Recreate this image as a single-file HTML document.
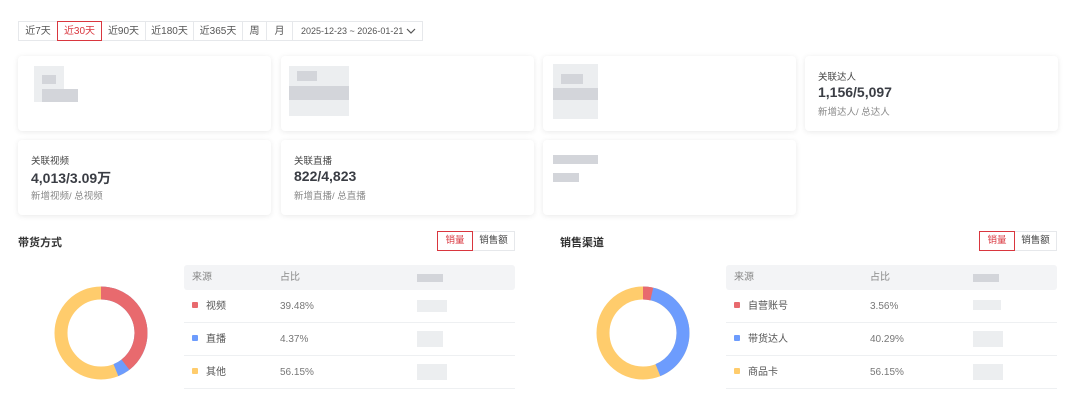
<!DOCTYPE html>
<html><head><meta charset="utf-8"><style>
*{box-sizing:border-box;margin:0;padding:0}
body{width:1080px;height:408px;background:#fff;font-family:"Liberation Sans","Noto Sans CJK SC",sans-serif;color:#333;position:relative;overflow:hidden}
.a{position:absolute}
.tab{position:absolute;top:21px;height:20px;border:1px solid #e6e8eb;font-size:10px;line-height:19px;text-align:center;color:#555}
.card{position:absolute;width:253px;height:75px;background:#fff;border-radius:4px;box-shadow:0 1px 6px rgba(0,0,0,.09)}
.lb{position:absolute;left:13px;top:13px;font-size:9.5px;color:#444}
.val{position:absolute;left:13px;top:28px;font-size:14px;font-weight:bold;color:#3a3d44}
.sub{position:absolute;left:13px;top:48px;font-size:9.5px;color:#888}
.bl{position:absolute;background:#d3d5da}
.bl2{position:absolute;background:#eceef0}
.title{position:absolute;top:234px;font-size:11px;font-weight:bold;color:#333}
.tg{position:absolute;top:231px;height:20px;font-size:9.5px;line-height:18px;text-align:center}
.th{position:absolute;height:25px;background:#f3f4f6;border-radius:3px;font-size:10px;line-height:25px;color:#888}
.row{position:absolute;height:33px;border-bottom:1px solid #eef0f2;font-size:10px;line-height:33px;color:#555}
.pc{color:#777}
.dot{display:inline-block;width:6px;height:6px;border-radius:1px;margin:0 8px 1px 8px}
</style></head><body>
<div class="tab" style="left:18px;width:40px">近7天</div>
<div class="tab" style="left:57px;width:45px;border-color:#d9363e;color:#d9363e;z-index:2">近30天</div>
<div class="tab" style="left:101px;width:45px">近90天</div>
<div class="tab" style="left:145px;width:49px">近180天</div>
<div class="tab" style="left:193px;width:50px">近365天</div>
<div class="tab" style="left:242px;width:25px">周</div>
<div class="tab" style="left:266px;width:27px">月</div>
<div class="tab" style="left:292px;width:131px;text-align:left;padding-left:8px;font-size:9px">2025-12-23 ~ 2026-01-21 <svg class="a" style="left:113px;top:6px" width="10" height="6" viewBox="0 0 10 6"><path d="M1 1l4 4 4-4" stroke="#555" fill="none" stroke-width="1.2"/></svg></div>

<div class="card" style="left:18px;top:56px"><div class="bl2" style="left:16px;top:10px;width:30px;height:36px"></div><div class="bl" style="left:24px;top:19px;width:14px;height:9px"></div><div class="bl" style="left:24px;top:33px;width:36px;height:13px"></div></div>
<div class="card" style="left:281px;top:56px"><div class="bl2" style="left:8px;top:10px;width:60px;height:50px"></div><div class="bl" style="left:16px;top:15px;width:20px;height:10px"></div><div class="bl" style="left:8px;top:30px;width:60px;height:14px"></div></div>
<div class="card" style="left:543px;top:56px"><div class="bl2" style="left:10px;top:8px;width:45px;height:55px"></div><div class="bl" style="left:18px;top:18px;width:22px;height:10px"></div><div class="bl" style="left:10px;top:32px;width:45px;height:12px"></div></div>
<div class="card" style="left:805px;top:56px"><div class="lb">关联达人</div><div class="val">1,156/5,097</div><div class="sub">新增达人/ 总达人</div></div>
<div class="card" style="left:18px;top:140px"><div class="lb">关联视频</div><div class="val">4,013/3.09万</div><div class="sub">新增视频/ 总视频</div></div>
<div class="card" style="left:281px;top:140px"><div class="lb">关联直播</div><div class="val">822/4,823</div><div class="sub">新增直播/ 总直播</div></div>
<div class="card" style="left:543px;top:140px"><div class="bl" style="left:10px;top:15px;width:45px;height:9px"></div><div class="bl" style="left:10px;top:33px;width:26px;height:9px"></div></div>

<div class="title" style="left:18px">带货方式</div>
<div class="tg" style="left:437px;width:36px;border:1px solid #d9363e;color:#d9363e;z-index:2">销量</div>
<div class="tg" style="left:472px;width:43px;border:1px solid #e6e8eb;color:#444">销售额</div>
<svg class="a" style="left:54px;top:286px" width="94" height="94" viewBox="0 0 94 94"><g transform="rotate(-90 47 47)" fill="none" stroke-width="13">
<circle cx="47" cy="47" r="40" stroke="#ffcc6c"/>
<circle cx="47" cy="47" r="40" stroke="#6d9cfd" stroke-dasharray="110.2 251.3"/>
<circle cx="47" cy="47" r="40" stroke="#e86a6e" stroke-dasharray="99.2 251.3"/></g></svg>
<div class="th" style="left:184px;top:265px;width:331px"><span style="position:absolute;left:8px">来源</span><span style="position:absolute;left:96px">占比</span><div class="bl" style="left:233px;top:9px;width:26px;height:8px"></div></div>
<div class="row" style="left:184px;top:290px;width:331px"><span class="dot" style="background:#e86a6e"></span>视频<span class="a pc" style="left:96px">39.48%</span><div class="bl2" style="left:233px;top:10px;width:30px;height:12px"></div></div>
<div class="row" style="left:184px;top:323px;width:331px"><span class="dot" style="background:#6d9cfd"></span>直播<span class="a pc" style="left:96px">4.37%</span><div class="bl2" style="left:233px;top:8px;width:26px;height:16px"></div></div>
<div class="row" style="left:184px;top:356px;width:331px"><span class="dot" style="background:#ffcc6c"></span>其他<span class="a pc" style="left:96px">56.15%</span><div class="bl2" style="left:233px;top:8px;width:30px;height:16px"></div></div>

<div class="title" style="left:560px">销售渠道</div>
<div class="tg" style="left:979px;width:36px;border:1px solid #d9363e;color:#d9363e;z-index:2">销量</div>
<div class="tg" style="left:1014px;width:43px;border:1px solid #e6e8eb;color:#444">销售额</div>
<svg class="a" style="left:596px;top:286px" width="94" height="94" viewBox="0 0 94 94"><g transform="rotate(-90 47 47)" fill="none" stroke-width="13">
<circle cx="47" cy="47" r="40" stroke="#ffcc6c"/>
<circle cx="47" cy="47" r="40" stroke="#6d9cfd" stroke-dasharray="110.2 251.3"/>
<circle cx="47" cy="47" r="40" stroke="#e86a6e" stroke-dasharray="8.9 251.3"/></g></svg>
<div class="th" style="left:726px;top:265px;width:331px"><span style="position:absolute;left:8px">来源</span><span style="position:absolute;left:144px">占比</span><div class="bl" style="left:247px;top:9px;width:26px;height:8px"></div></div>
<div class="row" style="left:726px;top:290px;width:331px"><span class="dot" style="background:#e86a6e"></span>自营账号<span class="a pc" style="left:144px">3.56%</span><div class="bl2" style="left:247px;top:10px;width:28px;height:10px"></div></div>
<div class="row" style="left:726px;top:323px;width:331px"><span class="dot" style="background:#6d9cfd"></span>带货达人<span class="a pc" style="left:144px">40.29%</span><div class="bl2" style="left:247px;top:8px;width:30px;height:16px"></div></div>
<div class="row" style="left:726px;top:356px;width:331px"><span class="dot" style="background:#ffcc6c"></span>商品卡<span class="a pc" style="left:144px">56.15%</span><div class="bl2" style="left:247px;top:8px;width:30px;height:16px"></div></div>
</body></html>
